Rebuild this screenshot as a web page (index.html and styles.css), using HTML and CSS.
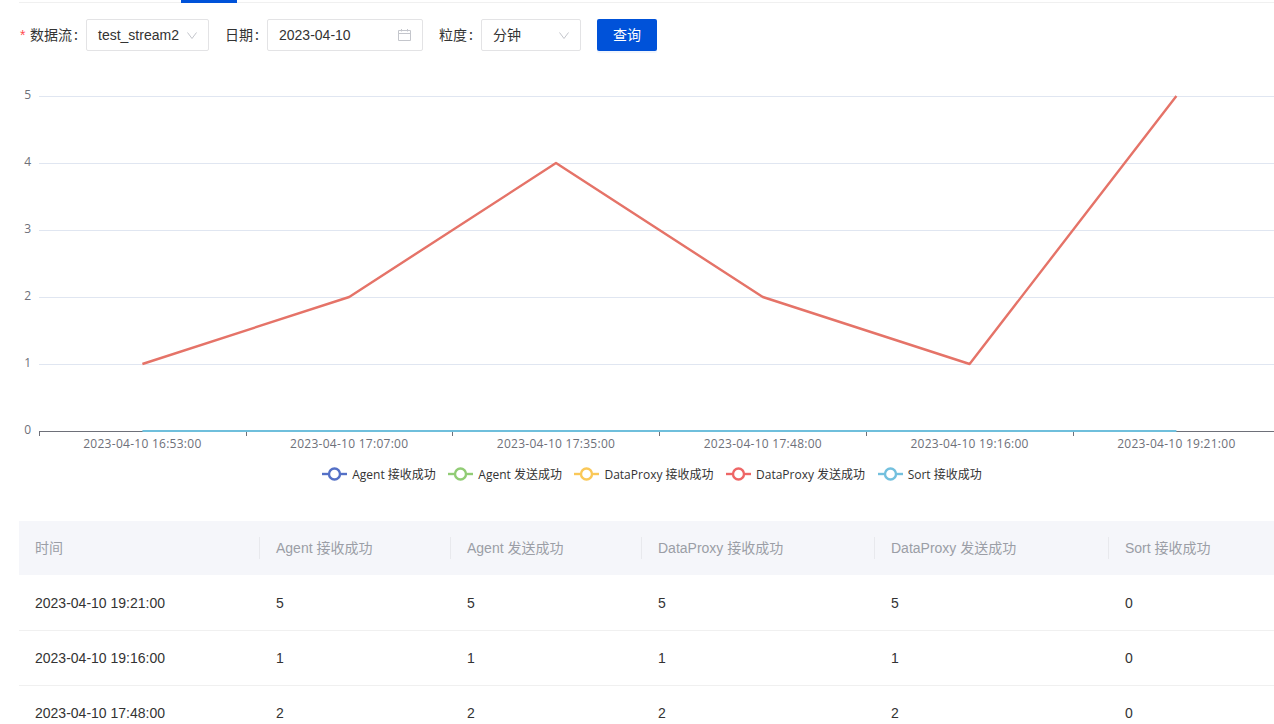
FILE: index.html
```html
<!DOCTYPE html>
<html lang="zh">
<head>
<meta charset="utf-8">
<title>数据流指标</title>
<link rel="stylesheet" href="styles.css">
</head>
<body>
<main class="page">
  <div class="tabs"><div class="tab-ink"></div></div>
  <form class="filters">
    <span class="req">*</span><label class="label label-stream">数据流<i>:</i></label>
    <div class="field field-stream"><span>test_stream2</span>
      <svg class="chev" width="12" height="12" viewBox="0 0 12 12"><path d="M1.500 3.500 6 9.500l4.500-6"/></svg>
    </div>
    <label class="label label-date">日期<i>:</i></label>
    <div class="field field-date"><span>2023-04-10</span>
      <svg class="cal" width="14" height="14" viewBox="0 0 14 14"><path d="M.5 2.500h12v10H.5zM.5 5.500h12M3.500 1v2.500M9.500 1v2.500"/></svg>
    </div>
    <label class="label label-gran">粒度<i>:</i></label>
    <div class="field field-gran"><span>分钟</span>
      <svg class="chev" width="12" height="12" viewBox="0 0 12 12"><path d="M1.500 3.500 6 9.500l4.500-6"/></svg>
    </div>
    <button type="button" class="query">查询</button>
  </form>

  <section class="chart">
    <svg class="plot" width="1266" height="395" viewBox="19 65 1266 395">
      <g class="grid">
        <path d="M39 96.500H1285M39 163.500H1285M39 230.500H1285M39 297.500H1285M39 364.500H1285"/>
      </g>
      <g class="ylabels">
        <text x="31" y="99">5</text>
        <text x="31" y="166">4</text>
        <text x="31" y="233">3</text>
        <text x="31" y="300">2</text>
        <text x="31" y="367">1</text>
        <text x="31" y="434">0</text>
      </g>
      <path class="axis" d="M39 431.500H1285M39.500 431v5M246.500 431v5M452.500 431v5M659.500 431v5M866.500 431v5M1073.500 431v5"/>
      <g class="xlabels">
        <text x="142.400" y="448">2023-04-10 16:53:00</text>
        <text x="349.200" y="448">2023-04-10 17:07:00</text>
        <text x="556" y="448">2023-04-10 17:35:00</text>
        <text x="762.800" y="448">2023-04-10 17:48:00</text>
        <text x="969.600" y="448">2023-04-10 19:16:00</text>
        <text x="1176.400" y="448">2023-04-10 19:21:00</text>
      </g>
      <polyline class="line-red" points="142.400,364 349.200,297 556,163 762.800,297 969.600,364 1176.400,96"/>
      <line class="line-blue" x1="142.400" y1="431" x2="1176.400" y2="431"/>
    </svg>
    <ul class="legend">
      <li><svg width="25" height="14" viewBox="0 0 25 14" class="lg lg-blue"><path d="M0 7h25"/><circle cx="12.500" cy="7" r="5.500"/></svg>Agent 接收成功</li>
      <li><svg width="25" height="14" viewBox="0 0 25 14" class="lg lg-green"><path d="M0 7h25"/><circle cx="12.500" cy="7" r="5.500"/></svg>Agent 发送成功</li>
      <li><svg width="25" height="14" viewBox="0 0 25 14" class="lg lg-yellow"><path d="M0 7h25"/><circle cx="12.500" cy="7" r="5.500"/></svg>DataProxy 接收成功</li>
      <li><svg width="25" height="14" viewBox="0 0 25 14" class="lg lg-red"><path d="M0 7h25"/><circle cx="12.500" cy="7" r="5.500"/></svg>DataProxy 发送成功</li>
      <li><svg width="25" height="14" viewBox="0 0 25 14" class="lg lg-cyan"><path d="M0 7h25"/><circle cx="12.500" cy="7" r="5.500"/></svg>Sort 接收成功</li>
    </ul>
  </section>

  <table class="data">
    <thead>
      <tr><th>时间</th><th>Agent 接收成功</th><th>Agent 发送成功</th><th>DataProxy 接收成功</th><th>DataProxy 发送成功</th><th>Sort 接收成功</th></tr>
    </thead>
    <tbody>
      <tr><td>2023-04-10 19:21:00</td><td>5</td><td>5</td><td>5</td><td>5</td><td>0</td></tr>
      <tr><td>2023-04-10 19:16:00</td><td>1</td><td>1</td><td>1</td><td>1</td><td>0</td></tr>
      <tr><td>2023-04-10 17:48:00</td><td>2</td><td>2</td><td>2</td><td>2</td><td>0</td></tr>
    </tbody>
  </table>
</main>
</body>
</html>
```
FILE: styles.css
```css
html, body {
  margin: 0;
  height: 100%;
  overflow: hidden;
  background: #fff;
}
body {
  font-family: "Liberation Sans", "Noto Sans CJK SC", sans-serif;
  font-size: 14px;
  color: #343a46;
}
.page {
  padding-left: 19px;
  width: 1266px;
}
.tabs {
  height: 2px;
  border-bottom: 1px solid #f0f0f0;
}
.tab-ink {
  margin-left: 162px;
  width: 56px;
  height: 3px;
  background: #0052d9;
}
.filters {
  display: flex;
  align-items: center;
  height: 32px;
  margin-top: 16px;
}
.req {
  color: #ff4d4f;
  width: 11px;
  flex: none;
  font-size: 14px;
  padding-left: 1px;
  box-sizing: border-box;
}
.label {
  font-family: "Noto Sans CJK SC", sans-serif;
  color: #333;
  display: flex;
  flex: none;
  white-space: nowrap;
  margin-bottom: 2px;
}
.label i {
  font-style: normal;
  margin-left: 2px;
}
.label-stream { width: 56px; }
.label-date { width: 42px; margin-left: 16px; }
.label-gran { width: 42px; margin-left: 16px; }
.field {
  box-sizing: border-box;
  height: 32px;
  border: 1px solid #e3e3e5;
  border-radius: 2px;
  display: flex;
  align-items: center;
  justify-content: space-between;
  padding: 0 11px;
  flex: none;
  color: #333;
}
.field-stream { width: 123px; padding-right: 10px; }
.field-date { width: 156px; padding-right: 10px; }
.field-gran { width: 100px; padding-right: 10px; padding-bottom: 2px; font-family: "Noto Sans CJK SC", sans-serif; }
.field-gran .chev { margin-top: 2px; }
.chev path, .cal path {
  fill: none;
  stroke: #c4c6cc;
  stroke-width: 1;
}
.query {
  margin-left: 16px;
  width: 60px;
  height: 32px;
  border: 0;
  border-radius: 2px;
  background: #0052d9;
  color: #fff;
  font-family: "Noto Sans CJK SC", sans-serif;
  font-size: 14px;
  padding: 0 0 2px;
  box-shadow: 0 2px 0 rgba(0, 82, 217, 0.06);
}
.chart {
  margin-top: 14px;
}
.plot {
  display: block;
}
.plot text {
  font-family: "Open Sans", "Noto Sans CJK SC", sans-serif;
  font-size: 12px;
  fill: #6e7079;
}
.grid path {
  stroke: #e0e6f1;
  fill: none;
}
.ylabels text { text-anchor: end; }
.xlabels text { text-anchor: middle; letter-spacing: 0.27px; }
.axis {
  stroke: #6e7079;
  fill: none;
}
.line-red {
  fill: none;
  stroke: #e57368;
  stroke-width: 2.400;
  stroke-linejoin: round;
}
.line-blue {
  stroke: #6fbfdc;
  stroke-width: 2;
}
.legend {
  list-style: none;
  margin: 0;
  padding: 0;
  height: 28px;
  display: flex;
  justify-content: center;
  align-items: center;
  gap: 12.500px;
  font-family: "Open Sans", "Noto Sans CJK SC", sans-serif;
  font-size: 12px;
  color: #333;
}
.legend li {
  display: flex;
  align-items: center;
  gap: 5px;
  white-space: nowrap;
}
.lg path { fill: none; stroke-width: 2.400; }
.lg circle { fill: #fff; stroke-width: 2.400; }
.lg-blue path, .lg-blue circle { stroke: #5470c6; }
.lg-green path, .lg-green circle { stroke: #91cc75; }
.lg-yellow path, .lg-yellow circle { stroke: #fac858; }
.lg-red path, .lg-red circle { stroke: #ee6666; }
.lg-cyan path, .lg-cyan circle { stroke: #73c0de; }
.data {
  margin-top: 33px;
  width: 1266px;
  table-layout: fixed;
  border-collapse: collapse;
}
.data th, .data td {
  box-sizing: border-box;
}
.data th:nth-child(1) { width: 241px; }
.data th:nth-child(2) { width: 191px; }
.data th:nth-child(3) { width: 191px; }
.data th:nth-child(4) { width: 233px; }
.data th:nth-child(5) { width: 234px; }
.data th {
  position: relative;
  height: 54px;
  padding: 0 16px 3px;
  background: #f5f6fa;
  color: #9b9ea6;
  font-weight: 400;
  text-align: left;
  white-space: nowrap;
}
.data th + th::before {
  content: "";
  position: absolute;
  left: -1px;
  top: 16px;
  width: 1px;
  height: 22px;
  background: #e8e9ed;
}
.data td {
  height: 55px;
  padding: 1px 16px 0;
  border-bottom: 1px solid #f0f0f0;
  color: #333;
}
```
